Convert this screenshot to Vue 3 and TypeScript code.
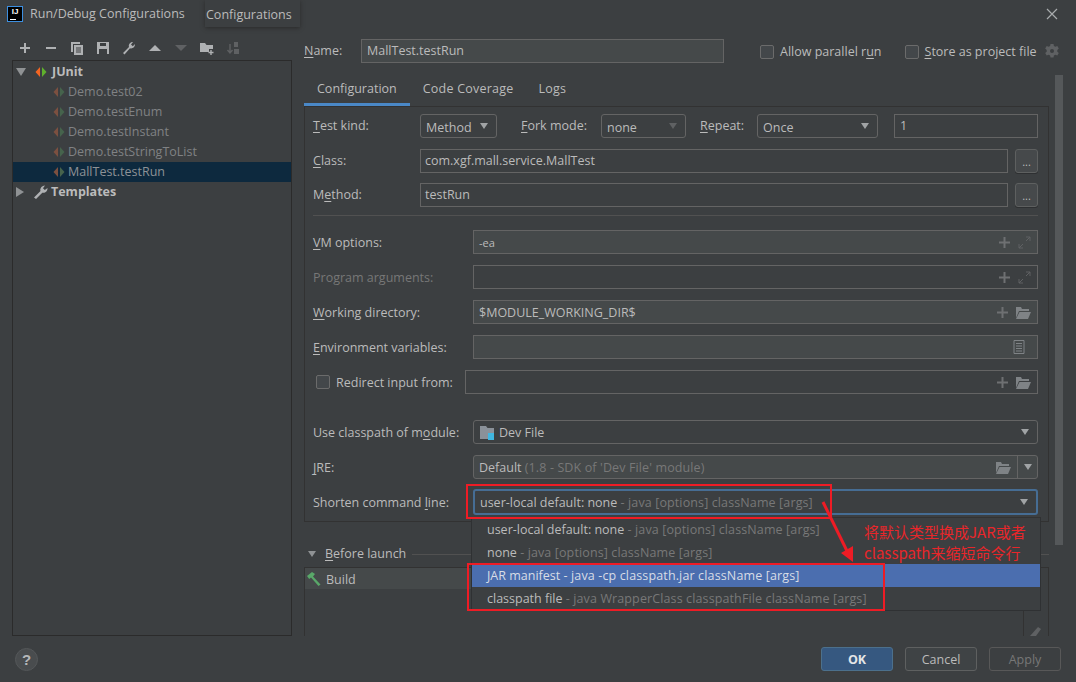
<script setup lang="ts">
const tests = ['Demo.test02', 'Demo.testEnum', 'Demo.testInstant', 'Demo.testStringToList', 'MallTest.testRun']
</script>

<template>
  <div class="dialog">
    <div class="titlebar">
      <div class="logo"><span>IJ</span><i></i></div>
      <span class="title">Run/Debug Configurations</span>
      <svg class="close" width="12" height="12" viewBox="0 0 12 12"><path d="M1 1l10 10M11 1L1 11" stroke="#a8abad" stroke-width="1.2" fill="none"/></svg>
    </div>
    <div class="tip">Configurations</div>

    <div class="content">
      <div class="left">
        <div class="toolbar">
          <svg width="14" height="14" viewBox="0 0 14 14"><path d="M7 2v10M2 7h10" stroke="#afb1b3" stroke-width="2"/></svg>
          <svg width="14" height="14" viewBox="0 0 14 14"><path d="M2 7h10" stroke="#afb1b3" stroke-width="2"/></svg>
          <svg width="14" height="14" viewBox="0 0 14 14"><path d="M1 1h9v2H3v8H1zM4 4h9v10H4z" fill="#afb1b3"/><path d="M6 7h5M6 9h5M6 11h5" stroke="#3c3f41"/></svg>
          <svg width="14" height="14" viewBox="0 0 14 14"><path d="M1 1h12v12H1z" fill="#afb1b3"/><path d="M4 2h6v3H4zM3 8h8v5H3z" fill="#3c3f41"/></svg>
          <svg width="14" height="14" viewBox="0 0 14 14"><path d="M1 12l6-6c-.8-2.300.8-5 4-5l-2 2.500 1.800 1.800L13 3c.2 3-2.500 5-5 4.200L2.500 13.500z" fill="#afb1b3"/></svg>
          <svg width="14" height="14" viewBox="0 0 14 14"><path d="M1 10l6-6 6 6z" fill="#afb1b3"/></svg>
          <svg width="14" height="14" viewBox="0 0 14 14"><path d="M1 4l6 6 6-6z" fill="#5f6163"/></svg>
          <svg width="14" height="14" viewBox="0 0 14 14"><path d="M0 2h5l1.500 2H13v4H9v3H0z" fill="#afb1b3"/><path d="M11 9v5M8.500 11.500h5" stroke="#afb1b3" stroke-width="1.400"/></svg>
          <svg width="14" height="14" viewBox="0 0 14 14"><path d="M4 3v8M1.500 9L4 12l2.500-3" stroke="#5f6163" stroke-width="1.400" fill="none"/><path d="M8 1h4v5H8zM8 8h5v5H8z" fill="#5f6163"/></svg>
        </div>
        <div class="tree">
          <div class="tree-row strong">
            <span class="arrow down"></span>
            <svg class="run-icon" width="12" height="12" viewBox="0 0 12 12"><path d="M5 1v10L.5 6z" fill="#f26522"/><path d="M7 1v10L11.500 6z" fill="#5fb02d"/></svg>
            <span>JUnit</span>
          </div>
          <div v-for="(t, i) in tests" :key="t" class="tree-row child" :class="{ selected: i === 4 }">
            <svg class="run-icon" width="12" height="12" viewBox="0 0 12 12"><path d="M5 1v10L.5 6z" fill="#7c5040"/><path d="M7 1v10L11.500 6z" fill="#46634c"/></svg>
            <span>{{ t }}</span>
          </div>
          <div class="tree-row strong">
            <span class="arrow"></span>
            <svg class="wrench" width="14" height="14" viewBox="0 0 14 14"><path d="M0 12.500l6.500-6.500c-.8-2.300.8-5 4.500-5.500l-2 2.800 1.800 1.800L13.500 3c.2 3.200-2.500 5.500-5.200 4.700L2 14z" fill="#afb1b3"/></svg>
            <span>Templates</span>
          </div>
        </div>
      </div>

      <div class="right">
        <div class="name-row">
          <label class="name-label"><u>N</u>ame:</label>
          <div class="field name-field filled">MallTest.testRun</div>
          <span class="check"></span>
          <span class="check-text">Allow parallel r<u>u</u>n</span>
          <span class="check second"></span>
          <span class="check-text"><u>S</u>tore as project file</span>
          <svg class="gear" width="14" height="14" viewBox="0 0 14 14"><path d="M5.500 0h3l.4 2 1.500.8L12.300 2l1.500 2.600-1.500 1.300v1.800l1.500 1.300-1.500 2.600-1.900-.8-1.500.8-.4 2h-3l-.4-2-1.500-.8-1.900.8L.2 9l1.500-1.300V5.900L.2 4.600 1.700 2l1.900.8L5.100 2zM7 5a2 2 0 100 4 2 2 0 000-4z" fill="#5f6163" fill-rule="evenodd"/></svg>
        </div>

        <div class="body">
          <div class="main-col">
            <div class="tabs">
              <span class="tab active">Configuration</span>
              <span class="tab wide">Code Coverage</span>
              <span class="tab wide">Logs</span>
            </div>
            <div class="panel">
              <div class="row top">
                <label class="lbl short"><u>T</u>est kind:</label>
                <div class="select w-method"><span>Method</span><b class="caret"></b></div>
                <label class="lbl fork"><u>F</u>ork mode:</label>
                <div class="select w-none"><span>none</span><b class="caret dim"></b></div>
                <label class="lbl repeat"><u>R</u>epeat:</label>
                <div class="select w-once"><span>Once</span><b class="caret"></b></div>
                <div class="field w-count">1</div>
              </div>
              <div class="row tight">
                <label class="lbl short"><u>C</u>lass:</label>
                <div class="field grow tight-text">com.xgf.mall.service.MallTest</div>
                <div class="dots">...</div>
              </div>
              <div class="row">
                <label class="lbl short">M<u>e</u>thod:</label>
                <div class="field grow tight-text">testRun</div>
                <div class="dots">...</div>
              </div>
              <div class="sep"></div>
              <div class="row">
                <label class="lbl"><u>V</u>M options:</label>
                <div class="field grow filled">
                  <span class="vm">-ea</span>
                  <svg class="plus" width="11" height="11" viewBox="0 0 11 11"><path d="M5.500 0v11M0 5.500h11" stroke="#6e7072" stroke-width="2"/></svg>
                  <svg class="expand" width="13" height="13" viewBox="0 0 13 13"><path d="M8 1h4v4M12 1L8 5M1 8v4h4M1 12l4-4" stroke="#5f6163" fill="none"/></svg>
                </div>
              </div>
              <div class="row">
                <label class="lbl off">Program arguments:</label>
                <div class="field grow">
                  <svg class="plus" width="11" height="11" viewBox="0 0 11 11"><path d="M5.500 0v11M0 5.500h11" stroke="#6e7072" stroke-width="2"/></svg>
                  <svg class="expand" width="13" height="13" viewBox="0 0 13 13"><path d="M8 1h4v4M12 1L8 5M1 8v4h4M1 12l4-4" stroke="#5f6163" fill="none"/></svg>
                </div>
              </div>
              <div class="row">
                <label class="lbl"><u>W</u>orking directory:</label>
                <div class="field grow filled">
                  <span>$MODULE_WORKING_DIR$</span>
                  <svg class="plus" width="11" height="11" viewBox="0 0 11 11"><path d="M5.500 0v11M0 5.500h11" stroke="#6e7072" stroke-width="2"/></svg>
                  <svg class="expand" width="15" height="13" viewBox="0 0 15 13"><path d="M0 1h5l1 2h7v2H3L0 12z" fill="#7f8386"/><path d="M3.500 6H15l-3 7H0z" fill="#7f8386"/></svg>
                </div>
              </div>
              <div class="row">
                <label class="lbl"><u>E</u>nvironment variables:</label>
                <div class="field grow filled">
                  <svg class="doc" width="12" height="14" viewBox="0 0 12 14"><path d="M1 .5h10v13H1z" stroke="#7f8386" fill="none"/><path d="M3 3.500h6M3 6h6M3 8.500h6M3 11h6" stroke="#7f8386"/></svg>
                </div>
              </div>
              <div class="row">
                <span class="check redirect"></span>
                <label class="lbl redirect-lbl">Redirect input from:</label>
                <div class="field grow">
                  <svg class="plus" width="11" height="11" viewBox="0 0 11 11"><path d="M5.500 0v11M0 5.500h11" stroke="#6e7072" stroke-width="2"/></svg>
                  <svg class="expand" width="15" height="13" viewBox="0 0 15 13"><path d="M0 1h5l1 2h7v2H3L0 12z" fill="#7f8386"/><path d="M3.500 6H15l-3 7H0z" fill="#7f8386"/></svg>
                </div>
              </div>
              <div class="row module">
                <label class="lbl">Use classpath of m<u>o</u>dule:</label>
                <div class="select grow">
                  <svg class="mod" width="15" height="15" viewBox="0 0 15 15"><path d="M0 1h6l1.500 2H14v11H0z" fill="#8a9199"/><path d="M8 8h6v7H8z" fill="#40b6e0"/></svg>
                  <span>Dev File</span><b class="caret"></b>
                </div>
              </div>
              <div class="row tight">
                <label class="lbl"><u>J</u>RE:</label>
                <div class="select grow filled jre">
                  <span>Default <em>(1.8 - SDK of 'Dev File' module)</em></span>
                  <svg class="jre-folder" width="15" height="13" viewBox="0 0 15 13"><path d="M0 1h5l1 2h7v2H3L0 12z" fill="#7f8386"/><path d="M3.500 6H15l-3 7H0z" fill="#7f8386"/></svg>
                  <i class="jre-div"></i>
                  <b class="caret"></b>
                </div>
              </div>
              <div class="row last">
                <label class="lbl">Shorten command <u>l</u>ine:</label>
                <div class="select grow focused">
                  <span>user-local default: none <em>- java [options] className [args]</em></span>
                  <b class="caret"></b>
                </div>
              </div>
            </div>
            <div class="before">
              <span class="arrow down small"></span>
              <span class="before-text"><u>B</u>efore launch</span>
              <i class="before-line"></i>
            </div>
            <div class="launch">
              <div class="launch-list">
                <div class="launch-row">
                  <svg width="16" height="16" viewBox="0 0 16 16"><path d="M1 5l5-4 3 2-2 2.500 7.500 8-2 1.500L5 6.500 3.200 8z" fill="#59a869"/></svg>
                  <span>Build</span>
                </div>
              </div>
              <div class="launch-side">
                <svg class="pencil" width="12" height="10" viewBox="0 0 12 10"><path d="M0 10l8-9 3 2-5 7z" fill="#5f6163"/></svg>
              </div>
            </div>
          </div>
          <div class="scrollbar"></div>
        </div>
      </div>
    </div>

    <div class="footer">
      <div class="help">?</div>
      <div class="btn primary">OK</div>
      <div class="btn">Cancel</div>
      <div class="btn disabled">Apply</div>
    </div>

    <div class="popup">
      <div class="pop-row">user-local default: none <em>- java [options] className [args]</em></div>
      <div class="pop-row">none <em>- java [options] className [args]</em></div>
      <div class="pop-row hot">JAR manifest <span class="hot-tail">- java -cp classpath.jar className [args]</span></div>
      <div class="pop-row">classpath file <em>- java WrapperClass classpathFile className [args]</em></div>
    </div>

    <div class="mark mark-top"></div>
    <div class="mark mark-bottom"></div>
    <svg class="red-arrow" width="40" height="70" viewBox="0 0 40 70">
      <path d="M3 4L29 57" stroke="#ee1c25" stroke-width="3" fill="none"/>
      <path d="M21 55l12-7v16z" fill="#ee1c25"/>
    </svg>
    <div class="note">将默认类型换成JAR或者<br>classpath来缩短命令行</div>
  </div>
</template>

<style>
html, body { margin: 0; background: #3c3f41; }
</style>

<style scoped>
.dialog {
  position: relative;
  width: 1076px;
  height: 682px;
  overflow: hidden;
  display: flex;
  flex-direction: column;
  background: #3c3f41;
  color: #bbbbbb;
  font: 12.5px/16px "Open Sans", "Noto Sans CJK SC", sans-serif;
}
u { text-underline-offset: 2px; }
em { font-style: normal; color: #787878; letter-spacing: .12px; }

.titlebar {
  height: 30px;
  flex: none;
  display: flex;
  align-items: center;
  padding: 0 18px 2px 7px;
  box-sizing: border-box;
}
.logo {
  position: relative;
  width: 16px;
  height: 16px;
  box-sizing: border-box;
  background: #000;
  border: 1px solid #3d8fe0;
  color: #fff;
  font: bold 8px/10px "Liberation Sans", sans-serif;
  text-align: center;
}
.logo i {
  position: absolute;
  left: 2px;
  bottom: 1px;
  width: 6px;
  height: 1px;
  background: #fff;
}
.title { margin-left: 7px; }
.close { margin-left: auto; }
.tip {
  position: absolute;
  left: 205px;
  top: 0;
  width: 95px;
  height: 27px;
  box-sizing: border-box;
  padding: 7px 0 0 1px;
  background: #3c3f41;
  box-shadow: 0 1px 4px #2a2a2a;
}

.content {
  display: flex;
  gap: 12px;
  padding: 9px 0 0 12px;
  height: 606px;
  box-sizing: border-box;
  flex: none;
}
.left { width: 280px; flex: none; }
.toolbar {
  display: flex;
  gap: 12px;
  padding-left: 6px;
  height: 18px;
  align-items: center;
  margin-bottom: 3px;
}
.tree {
  height: 576px;
  box-sizing: border-box;
  border: 1px solid #2b2b2b;
  padding-top: 1px;
}
.tree-row {
  height: 20px;
  display: flex;
  align-items: center;
  color: #8a8c8e;
  white-space: nowrap;
}
.tree-row.strong { color: #bbbbbb; font-weight: 700; }
.tree-row.strong .run-icon { margin-right: 5px; }
.tree-row.strong .wrench { margin-right: 3px; margin-left: -1px; }
.tree-row.child { padding-left: 40px; color: #808284; }
.tree-row.child .run-icon { margin-right: 3px; }
.tree-row.selected { background: #0d293e; color: #8d9296; }
.arrow {
  width: 0;
  height: 0;
  margin: 0 11px 0 3px;
  border-style: solid;
  border-width: 5px 0 5px 8px;
  border-color: transparent transparent transparent #8f9294;
}
.arrow.down {
  border-width: 8px 5px 0;
  border-color: #8f9294 transparent transparent;
  margin: 0 9px 0 3px;
}
.arrow.small {
  border-width: 6px 4px 0;
  margin: 0 0 0 4px;
}

.right { flex: 1; min-width: 0; }
.name-row {
  height: 24px;
  display: flex;
  align-items: center;
  margin-bottom: 12px;
}
.name-label { width: 57px; }
.name-field { width: 363px; }
.check {
  width: 14px;
  height: 14px;
  flex: none;
  box-sizing: border-box;
  border: 1px solid #6b6b6b;
  border-radius: 2px;
  background: #43474a;
  margin-left: 36px;
  margin-top: 1px;
}
.check.second { margin-left: 23px; }
.check-text { margin-left: 6px; white-space: nowrap; margin-top: 1px; }
.gear { margin-left: 8px; }

.body { display: flex; gap: 6px; align-items: flex-start; }
.main-col { width: 745px; flex: none; }
.scrollbar {
  width: 8px;
  height: 470px;
  background: #55585a;
}
.tabs { height: 31px; display: flex; box-sizing: border-box; }
.tab { padding: 6px 13px 0; height: 31px; box-sizing: border-box; }
.tab.active { box-shadow: inset 0 -3px 0 #4a88c7; }
.tab.wide { letter-spacing: .22px; margin-right: -1px; }
.panel {
  height: 416px;
  box-sizing: border-box;
  border: 1px solid #323232;
  padding: 7px 10px 0 8px;
}
.row {
  height: 24px;
  display: flex;
  align-items: center;
  margin-bottom: 11px;
}
.row.tight { margin-bottom: 10px; }
.row.module { margin-top: 26px; }
.row.last { height: 26px; margin-bottom: 0; }
.row.top .select > span { padding-top: 4px; }
/* rows below the separator sit a pixel lower inside their boxes */
.sep ~ .row .lbl,
.sep ~ .row .field > span,
.sep ~ .row .select > span { padding-top: 2px; }
.lbl {
  width: 160px;
  flex: none;
  white-space: nowrap;
}
.lbl.short { width: 107px; }
.lbl.fork { width: 80px; margin-left: 24px; }
.lbl.repeat { width: 57px; margin-left: 14px; }
.lbl.off { color: #777777; }
.lbl.redirect-lbl { width: 129px; margin-left: 6px; }
.check.redirect { margin-left: 3px; margin-top: 0; }
.sep { height: 1px; background: #515151; margin: -3px 0 14px; }

.field, .select {
  height: 24px;
  box-sizing: border-box;
  display: flex;
  align-items: center;
  padding: 0 5px;
  border: 1px solid #646464;
  white-space: nowrap;
  min-width: 0;
}
.tight-text { padding-left: 4px; }
.grow { flex: 1; }
.filled { background: #45494a; }
.select { border-radius: 3px; position: relative; }
.select .caret { margin-left: auto; }
.caret {
  width: 0;
  height: 0;
  margin-right: 3px;
  border-style: solid;
  border-width: 6px 4px 0;
  border-color: #a0a3a5 transparent transparent;
  flex: none;
}
.caret.dim { border-top-color: #5f6163; }
.w-method { width: 77px; flex: none; }
.w-none { width: 85px; flex: none; }
.w-once { width: 121px; flex: none; }
.w-count { width: 144px; flex: none; margin-left: 16px; }
.dots {
  width: 23px;
  height: 24px;
  margin-left: 7px;
  flex: none;
  box-sizing: border-box;
  border: 1px solid #5e6060;
  border-radius: 3px;
  background: #46494b;
  text-align: center;
  font-size: 11px;
  line-height: 24px;
  box-shadow: 0 1px 0 #2e3032;
}
.vm { font-size: 11px; }
.plus { margin-left: auto; }
.expand { margin-left: 8px; margin-right: 1px; }
.doc { margin-left: auto; margin-right: 7px; }
.mod { margin: 0 4px 0 1px; }
.jre { padding-right: 0; }
.jre-folder { margin-left: auto; margin-right: 6px; }
.jre-div { width: 1px; height: 22px; background: #646464; margin-right: 6px; }
.jre .caret { margin: 0 5px 0 0; }
.focused {
  height: 26px;
  border: 2px solid #466d94;
  background: #3c3f41;
  padding: 0 5px;
}

.before {
  height: 16px;
  margin-top: 24px;
  display: flex;
  align-items: center;
}
.before-text { margin-left: 9px; white-space: nowrap; }
.before-line { flex: 1; height: 1px; background: #515151; margin-left: 6px; }
.launch {
  height: 69px;
  margin-top: 5px;
  display: flex;
  box-sizing: border-box;
  border: 1px solid #323232;
  border-bottom: 0;
}
.launch-list { flex: 1; }
.launch-row {
  height: 21px;
  display: flex;
  align-items: center;
  gap: 4px;
  background: #45494a;
  padding-left: 1px;
}
.launch-row span { padding-top: 2px; }
.launch-side {
  width: 24px;
  border-left: 1px solid #323232;
  display: flex;
  align-items: flex-end;
  justify-content: center;
}

.footer {
  display: flex;
  align-items: center;
  gap: 12px;
  padding: 11px 15px 0;
}
.help {
  width: 23px;
  height: 23px;
  box-sizing: border-box;
  border-radius: 50%;
  border: 1px solid #545759;
  background: #494c4e;
  text-align: center;
  color: #b5b7b9;
  font: bold 15px/21px "Liberation Sans", sans-serif;
  margin-right: auto;
}
.btn {
  width: 72px;
  height: 24px;
  box-sizing: border-box;
  border: 1px solid #5e6060;
  border-radius: 3px;
  background: #3f4345;
  text-align: center;
  line-height: 23px;
}
.btn.primary {
  background: #365880;
  border-color: #4c708c;
  color: #e3e5e7;
  font-weight: 700;
}
.btn.disabled { background: transparent; color: #777777; border-color: #585858; }

.popup {
  position: absolute;
  left: 471px;
  top: 517px;
  width: 570px;
  box-sizing: border-box;
  background: #3c3f41;
  border: 1px solid #2f3133;
  border-top-color: #333;
}
.pop-row {
  height: 23px;
  line-height: 23px;
  padding-left: 15px;
}
.pop-row.hot { background: #4b6eaf; color: #d8dde6; }
.hot-tail { letter-spacing: .14px; }

.mark {
  position: absolute;
  box-sizing: border-box;
  border: 2px solid #ee1c25;
}
.mark-top { left: 466px; top: 484px; width: 366px; height: 35px; }
.mark-bottom { left: 467px; top: 563px; width: 418px; height: 48px; }
.red-arrow { position: absolute; left: 820px; top: 498px; }
.note {
  position: absolute;
  left: 864px;
  top: 521px;
  width: 190px;
  color: #e8262a;
  font-size: 15px;
  line-height: 21px;
  white-space: nowrap;
  font-family: "Noto Sans CJK SC", sans-serif;
}
</style>
